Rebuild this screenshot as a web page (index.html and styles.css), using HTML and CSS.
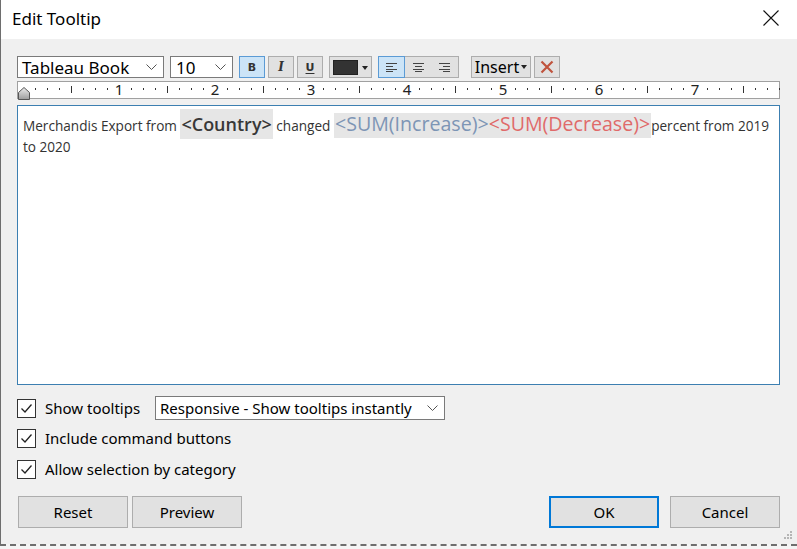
FILE: index.html
```html
<!DOCTYPE html>
<html>
<head>
<meta charset="utf-8">
<title>Edit Tooltip</title>
<link rel="stylesheet" href="styles.css">
</head>
<body>
<div class="window">
  <div class="titlebar">
    <span class="title">Edit Tooltip</span>
    <svg class="close" width="16" height="16" viewBox="0 0 16 16"><path d="M0.5 0.5 L15.5 15.5 M15.5 0.5 L0.5 15.5" stroke="#111" stroke-width="1.1" fill="none"/></svg>
  </div>
  <div class="content">
    <div class="toolbar">
      <div class="select font-select"><span>Tableau Book</span><svg class="chev" width="11" height="6" viewBox="0 0 11 6"><path d="M0.5 0.5 L5.5 5.5 L10.5 0.5" stroke="#555" fill="none"/></svg></div>
      <div class="select size-select"><span>10</span><svg class="chev" width="11" height="6" viewBox="0 0 11 6"><path d="M0.5 0.5 L5.5 5.5 L10.5 0.5" stroke="#555" fill="none"/></svg></div>
      <div class="tbtn sq active"><span class="g-bold">B</span></div>
      <div class="tbtn sq gap3"><span class="g-ital">I</span></div>
      <div class="tbtn sq gap3"><span class="g-under">U</span></div>
      <div class="tbtn colorbtn"><span class="swatch"></span><span class="caret"></span></div>
      <div class="align-group">
        <div class="seg active"><svg width="11" height="9" viewBox="0 0 11 9"><path d="M0 0.5H11M0 3.5H7M0 6.5H11M0 8.5H7" stroke="#444" stroke-width="1" fill="none"/></svg></div>
        <div class="seg"><svg width="11" height="9" viewBox="0 0 11 9"><path d="M0 0.5H11M2 3.5H9M0 6.5H11M2 8.5H9" stroke="#444" stroke-width="1" fill="none"/></svg></div>
        <div class="seg"><svg width="11" height="9" viewBox="0 0 11 9"><path d="M0 0.5H11M4 3.5H11M0 6.5H11M4 8.5H11" stroke="#444" stroke-width="1" fill="none"/></svg></div>
      </div>
      <div class="tbtn insert"><span>Insert</span><span class="caret"></span></div>
      <div class="tbtn sq gap3 clear"><svg width="14" height="14" viewBox="0 0 14 14"><path d="M1.5 1.5 L12.5 12.5 M12.5 1.5 L1.5 12.5" stroke="#c0533d" stroke-width="2.2" fill="none"/></svg></div>
    </div>
    <div class="ruler">
      <svg width="763" height="18" viewBox="0 0 763 18">
        <defs>
          <pattern id="ticks" x="6" y="0" width="96" height="18" patternUnits="userSpaceOnUse">
            <rect x="12" y="7" width="1" height="2" fill="#333"/>
            <rect x="24" y="7" width="1" height="2" fill="#333"/>
            <rect x="36" y="7" width="1" height="2" fill="#333"/>
            <rect x="48" y="5" width="1" height="7" fill="#333"/>
            <rect x="60" y="7" width="1" height="2" fill="#333"/>
            <rect x="72" y="7" width="1" height="2" fill="#333"/>
            <rect x="84" y="7" width="1" height="2" fill="#333"/>
          </pattern>
        </defs>
        <rect x="0" y="0" width="763" height="18" fill="url(#ticks)"/>
        <g class="rnum" font-size="15" text-anchor="middle" fill="#222">
          <text x="102" y="14">1</text>
          <text x="198" y="14">2</text>
          <text x="294" y="14">3</text>
          <text x="390" y="14">4</text>
          <text x="486" y="14">5</text>
          <text x="582" y="14">6</text>
          <text x="678" y="14">7</text>
        </g>
      </svg>
      <svg class="thumb" width="12" height="13" viewBox="0 0 12 13"><defs><linearGradient id="thumb2" x1="0" y1="0" x2="0" y2="1"><stop offset="0" stop-color="#ececec"/><stop offset="1" stop-color="#9c9c9c"/></linearGradient></defs><path d="M0.5 5.5 L6 0.5 L11.5 5.5 L11.5 12.5 L0.5 12.5 Z" fill="url(#thumb2)" stroke="#555"/></svg>
    </div>
    <div class="editor">
      <p class="tip">Merchandis Export from <span class="fld country">&lt;Country&gt;</span> changed <span class="fld sums"><span class="inc">&lt;SUM(Increase)&gt;</span><span class="dec">&lt;SUM(Decrease)&gt;</span></span>percent from 2019 to 2020</p>
    </div>
    <div class="options">
      <div class="opt row1">
        <span class="cbox"><svg width="17" height="17" viewBox="0 0 17 17"><path d="M3.5 8.5 L7 12 L13.5 4.5" stroke="#222" stroke-width="1.3" fill="none"/></svg></span>
        <span class="olabel fixed">Show tooltips</span>
        <div class="select resp"><span>Responsive - Show tooltips instantly</span><svg class="chev" width="11" height="6" viewBox="0 0 11 6"><path d="M0.5 0.5 L5.5 5.5 L10.5 0.5" stroke="#555" fill="none"/></svg></div>
      </div>
      <div class="opt row2">
        <span class="cbox"><svg width="17" height="17" viewBox="0 0 17 17"><path d="M3.5 8.5 L7 12 L13.5 4.5" stroke="#222" stroke-width="1.3" fill="none"/></svg></span>
        <span class="olabel">Include command buttons</span>
      </div>
      <div class="opt row3">
        <span class="cbox"><svg width="17" height="17" viewBox="0 0 17 17"><path d="M3.5 8.5 L7 12 L13.5 4.5" stroke="#222" stroke-width="1.3" fill="none"/></svg></span>
        <span class="olabel">Allow selection by category</span>
      </div>
    </div>
    <div class="buttons">
      <div class="bgroup">
        <div class="btn reset">Reset</div>
        <div class="btn preview">Preview</div>
      </div>
      <div class="bgroup">
        <div class="btn ok">OK</div>
        <div class="btn cancel">Cancel</div>
      </div>
    </div>
    <svg class="grip" width="8" height="8" viewBox="0 0 8 8"><g fill="#b5b5b5"><rect x="6" y="0" width="2" height="2"/><rect x="3" y="3" width="2" height="2"/><rect x="6" y="3" width="2" height="2"/><rect x="0" y="6" width="2" height="2"/><rect x="3" y="6" width="2" height="2"/><rect x="6" y="6" width="2" height="2"/></g></svg>
  </div>
</div>
<div class="desk"></div>
</body>
</html>
```
FILE: styles.css
```css
html, body {
  margin: 0;
  padding: 0;
}
body {
  width: 797px;
  height: 549px;
  overflow: hidden;
  background: #f0f0f0;
  font-family: "Noto Sans", "Open Sans", sans-serif;
  color: #000;
}
.window {
  height: 544px;
  border-left: 1px solid #6e6e6e;
  display: flex;
  flex-direction: column;
  box-sizing: border-box;
}
.titlebar {
  height: 39px;
  flex: none;
  background: #fff;
  display: flex;
  align-items: center;
  justify-content: space-between;
  padding: 0 18px 0 11px;
}
.title {
  font-size: 17px;
  margin-top: -2px;
}
.close {
  margin-top: -3px;
}
.content {
  flex: 1;
  position: relative;
  background: #f0f0f0;
  padding: 0 17px 0 16px;
}
.toolbar {
  margin-top: 17px;
  height: 22px;
  display: flex;
  align-items: stretch;
}
.select {
  box-sizing: border-box;
  background: #fff;
  border: 1px solid #7a7a7a;
  display: flex;
  align-items: center;
  justify-content: space-between;
  font-size: 16px;
  line-height: 1;
}
.font-select {
  width: 147px;
  padding: 0 6px 0 4px;
}
.font-select span {
  font-size: 17px;
}
.size-select {
  width: 63px;
  margin-left: 6px;
  padding: 0 6px 0 5px;
}
.size-select span {
  font-size: 17px;
}
.tbtn {
  box-sizing: border-box;
  background: #e1e1e1;
  border: 1px solid #adadad;
  display: flex;
  align-items: center;
  justify-content: center;
}
.tbtn.sq {
  width: 26px;
  margin-left: 6px;
}
.tbtn.sq.gap3 {
  margin-left: 3px;
}
.tbtn.active {
  background: #cce4f7;
  border-color: #5b9bd5;
}
.g-bold {
  font-family: "DejaVu Sans", sans-serif;
  font-weight: bold;
  font-size: 11px;
  color: #333;
}
.g-ital {
  font-family: "DejaVu Serif", serif;
  font-weight: bold;
  font-style: italic;
  font-size: 12px;
  color: #333;
}
.g-under {
  font-family: "DejaVu Sans", sans-serif;
  font-weight: bold;
  font-size: 11px;
  color: #333;
  text-decoration: underline;
  text-underline-offset: 2px;
}
.colorbtn {
  width: 43px;
  margin-left: 6px;
  justify-content: flex-start;
  padding-left: 3px;
}
.swatch {
  width: 25px;
  height: 15px;
  background: #333;
  border: 1px solid #222;
  box-sizing: border-box;
}
.caret {
  width: 0;
  height: 0;
  border-left: 3px solid transparent;
  border-right: 3px solid transparent;
  border-top: 4px solid #222;
  margin-left: 4px;
  margin-top: 1px;
}
.align-group {
  margin-left: 6px;
  width: 81px;
  box-sizing: border-box;
  border: 1px solid #adadad;
  background: #e1e1e1;
  display: flex;
}
.seg {
  flex: 1;
  display: flex;
  align-items: center;
  justify-content: center;
}
.seg.active {
  background: #cce4f7;
  outline: 1px solid #5b9bd5;
  outline-offset: -1px;
  margin: -1px 0 -1px -1px;
}
.insert {
  width: 60px;
  margin-left: 12px;
  font-size: 16px;
  padding-bottom: 1px;
}
.insert .caret {
  margin-left: 2px;
}
.ruler {
  margin-top: 3px;
  height: 18px;
  position: relative;
  box-sizing: border-box;
  background: #fff;
  border: 1px solid #a0a0a0;
}
.ruler > svg:first-child {
  position: absolute;
  left: -1px;
  top: -1px;
  overflow: visible;
}
.rnum {
  font-family: "Noto Sans", sans-serif;
}
.thumb {
  position: absolute;
  left: 0px;
  top: 5px;
}
.editor {
  margin-top: 6px;
  height: 280px;
  box-sizing: border-box;
  background: #fff;
  border: 1px solid #3c7fb1;
  padding: 7px 5px 0 5px;
}
.tip {
  margin: 0;
  font-family: "Open Sans", sans-serif;
  font-size: 13.6px;
  color: #333;
  line-height: 21px;
}
.fld {
  background: #e6e6e6;
  padding: 3px 1px 3px 1px;
}
.country {
  font-size: 18px;
  font-weight: 600;
  color: #383838;
}
.inc {
  font-size: 19.6px;
  color: #7d95b5;
}
.dec {
  font-size: 19.6px;
  color: #e06a6a;
}
.options {
  margin-top: 11px;
}
.opt {
  display: flex;
  align-items: center;
  height: 24px;
  font-size: 15px;
}
.row2 {
  margin-top: 6px;
}
.row3 {
  margin-top: 7px;
}
.cbox {
  width: 19px;
  height: 19px;
  box-sizing: border-box;
  border: 1px solid #333;
  background: #fff;
  display: flex;
  align-items: center;
  justify-content: center;
  flex: none;
}
.olabel {
  margin-left: 9px;
}
.olabel.fixed {
  width: 110px;
  flex: none;
}
.resp {
  width: 290px;
  height: 24px;
  padding: 0 6px 0 4px;
  font-size: 15px;
}
.buttons {
  margin-top: 15px;
  display: flex;
  justify-content: space-between;
}
.bgroup {
  display: flex;
}
.btn {
  box-sizing: border-box;
  width: 110px;
  height: 32px;
  background: #e1e1e1;
  border: 1px solid #adadad;
  display: flex;
  align-items: center;
  justify-content: center;
  font-size: 15px;
}
.reset {
  margin-left: 1px;
}
.preview {
  margin-left: 4px;
}
.ok {
  border: 2px solid #0078d7;
}
.cancel {
  margin-left: 11px;
}
.grip {
  position: absolute;
  right: 5px;
  bottom: 5px;
}
.desk {
  height: 5px;
  border-top: 2px dashed #6e6e6e;
  background: #f4f4f4;
}
```
